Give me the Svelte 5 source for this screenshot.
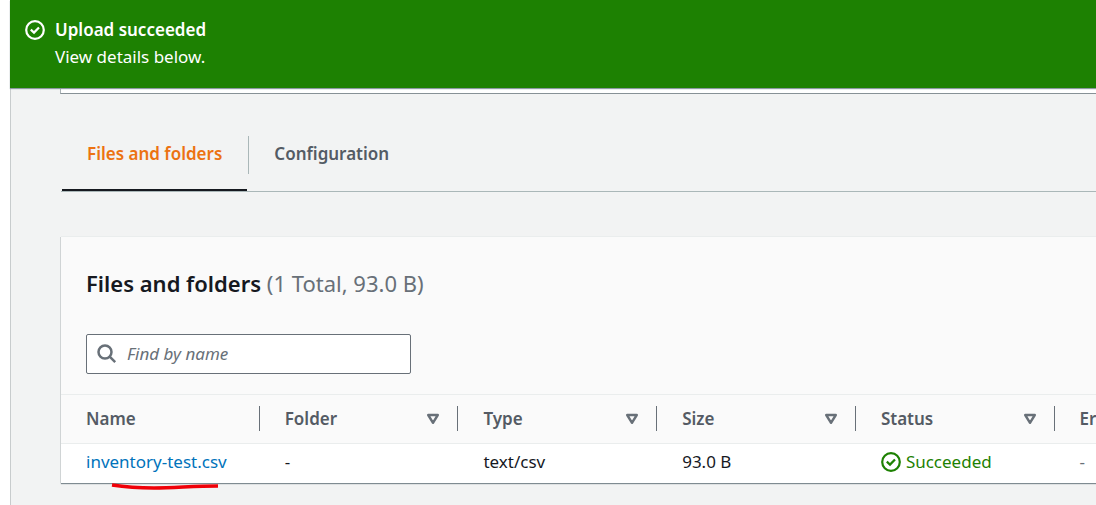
<script>
  const columns = ['Name', 'Folder', 'Type', 'Size', 'Status', 'Error'];
  const files = [
    { name: 'inventory-test.csv', folder: '-', type: 'text/csv', size: '93.0 B', status: 'Succeeded', error: '-' }
  ];
  let active = $state('Files and folders');
  let query = $state('');
  const shown = $derived(files.filter((f) => f.name.includes(query)));
</script>

{#snippet check()}
  <svg class="check" viewBox="0 0 20 20" aria-hidden="true">
    <circle cx="10" cy="10" r="8.8" />
    <path d="M5.8 9.6 9 12.6 14 7.4" />
  </svg>
{/snippet}

<div class="app">
  <div class="flash" role="status">
    {@render check()}
    <div>
      <strong>Upload succeeded</strong>
      <div>View details below.</div>
    </div>
  </div>

  <main>
    <div class="summary-end"></div>

    <div class="tabs" role="tablist">
      {#each ['Files and folders', 'Configuration'] as tab}
        <button role="tab" aria-selected={active === tab} class:active={active === tab} onclick={() => (active = tab)}>
          <span>{tab}</span>
        </button>
      {/each}
    </div>

    <section class="card">
      <header>
        <h2>Files and folders <span>(1 Total, 93.0 B)</span></h2>
        <label class="search">
          <svg viewBox="0 0 20 20" aria-hidden="true">
            <circle cx="8" cy="8" r="6.5" />
            <path d="M12.7 12.7 18.2 18.2" />
          </svg>
          <input type="text" placeholder="Find by name" aria-label="Find by name" bind:value={query} />
        </label>
      </header>
      <div class="table-wrap">
        <table>
          <thead>
            <tr>
              {#each columns as column, i}
                <th scope="col">
                  <div class="head">
                    {column}
                    {#if i > 0 && i < 5}
                      <button class="sort" aria-label="Sort by {column}">
                        <svg viewBox="0 0 14 12" aria-hidden="true"><path d="M2.2 2h9.6L7 9.8z" /></svg>
                      </button>
                    {/if}
                  </div>
                </th>
              {/each}
            </tr>
          </thead>
          <tbody>
            {#each shown as file}
              <tr>
                <td><a href="#file">{file.name}</a></td>
                <td>{file.folder}</td>
                <td>{file.type}</td>
                <td>{file.size}</td>
                <td><span class="status">{@render check()}{file.status}</span></td>
                <td class="muted">{file.error}</td>
              </tr>
            {/each}
          </tbody>
        </table>
      </div>
      <svg class="marker" viewBox="0 0 110 10" aria-hidden="true">
        <path d="M1 2C14 4 27 5 43 5C64 5 82 3 107 3" />
      </svg>
    </section>
  </main>
</div>

<style>
  :global(body) {
    margin: 0;
    background: #fff;
  }
  .app {
    min-height: 100vh;
    box-sizing: border-box;
    padding-left: 10px;
    display: flex;
    flex-direction: column;
    overflow: hidden;
    font-family: 'Noto Sans', 'Open Sans', sans-serif;
    font-size: 17px;
    line-height: 27px;
    color: #16191f;
  }
  .flash {
    display: flex;
    gap: 10px;
    padding: 16px 15px 18px;
    background: #1d8102;
    color: #fff;
    box-shadow: 0 1px 1px #8b9aa0;
    z-index: 1;
  }
  .check {
    flex: none;
    width: 20px;
    height: 20px;
    fill: none;
    stroke: currentColor;
    stroke-width: 2.2;
  }
  .flash .check {
    margin-top: 4px;
  }
  .flash strong,
  th,
  .tabs button {
    font-weight: 600;
  }
  main {
    flex: 1;
    padding-left: 50px;
    background: #f2f3f3;
    border-left: 1px solid #c8cccd;
  }
  .summary-end {
    height: 5px;
    margin-left: -1px;
    background: #fff;
    border-left: 1px solid #aab2b5;
    border-bottom: 1px solid #879196;
  }
  .tabs {
    display: flex;
    align-items: flex-start;
    padding-top: 42px;
    border-bottom: 1px solid #aab7b8;
  }
  .tabs button {
    font-family: inherit;
    font-size: 17px;
    line-height: 36px;
    color: #545b64;
    background: none;
    border: 0;
    border-bottom: 2px solid transparent;
    padding: 0 0 15px;
    margin: 0 0 0 1px;
    cursor: pointer;
  }
  .tabs button span {
    display: block;
    padding: 0 25px 2px;
  }
  .tabs button + button span {
    border-left: 1px solid #aab7b8;
  }
  .tabs button.active {
    color: #ec7211;
    border-bottom-color: #16191f;
  }
  .card {
    position: relative;
    margin-top: 45px;
    background: #fafafa;
    box-shadow: -1px 0 0 #d0d4d5, 0 1px 1px #7f8b91, 0 -1px 0 #eaeded;
  }
  header {
    padding: 31px 25px 20px;
  }
  h2 {
    margin: 0 0 36px;
    font-size: 22px;
    line-height: 30px;
    font-weight: 600;
  }
  h2 span {
    font-weight: 400;
    color: #687078;
  }
  .search {
    display: flex;
    align-items: center;
    gap: 10px;
    box-sizing: border-box;
    width: 325px;
    max-width: 100%;
    height: 40px;
    padding: 0 10px;
    background: #fff;
    border: 1px solid #687078;
    border-radius: 2px;
  }
  .search svg {
    flex: none;
    width: 20px;
    height: 20px;
    fill: none;
    stroke: #687078;
    stroke-width: 2.5;
  }
  .search input {
    flex: 1;
    min-width: 0;
    padding: 0 0 2px;
    border: 0;
    outline: 0;
    background: none;
    font: inherit;
    color: inherit;
  }
  .search input::placeholder {
    color: #687078;
    font-style: italic;
    opacity: 1;
  }
  .table-wrap {
    overflow: hidden;
  }
  table {
    width: 115.2%;
    table-layout: fixed;
    border-collapse: separate;
    border-spacing: 0;
  }
  th {
    padding: 11px 0 12px;
    text-align: left;
    line-height: 24px;
    color: #545b64;
    border-top: 1px solid #eaeded;
    border-bottom: 1px solid #eaeded;
  }
  .head {
    display: flex;
    align-items: center;
    justify-content: space-between;
    height: 25px;
    padding: 0 17px 0 25px;
    border-right: 1px solid #687078;
  }
  .sort {
    display: flex;
    padding: 0;
    border: 0;
    background: none;
    cursor: pointer;
  }
  .sort svg {
    width: 14px;
    height: 12px;
    fill: none;
    stroke: #687078;
    stroke-width: 2.4;
    stroke-linejoin: round;
  }
  td {
    padding: 4px 25px 8px;
    background: #fff;
    white-space: nowrap;
  }
  a {
    color: #0073bb;
    text-decoration: none;
  }
  .status {
    display: flex;
    align-items: center;
    gap: 5px;
    color: #1d8102;
  }
  .muted {
    color: #687078;
  }
  .marker {
    position: absolute;
    left: 50px;
    top: 100%;
    width: 110px;
    height: 10px;
    fill: none;
    stroke: #f00008;
    stroke-width: 3.4;
  }
</style>
